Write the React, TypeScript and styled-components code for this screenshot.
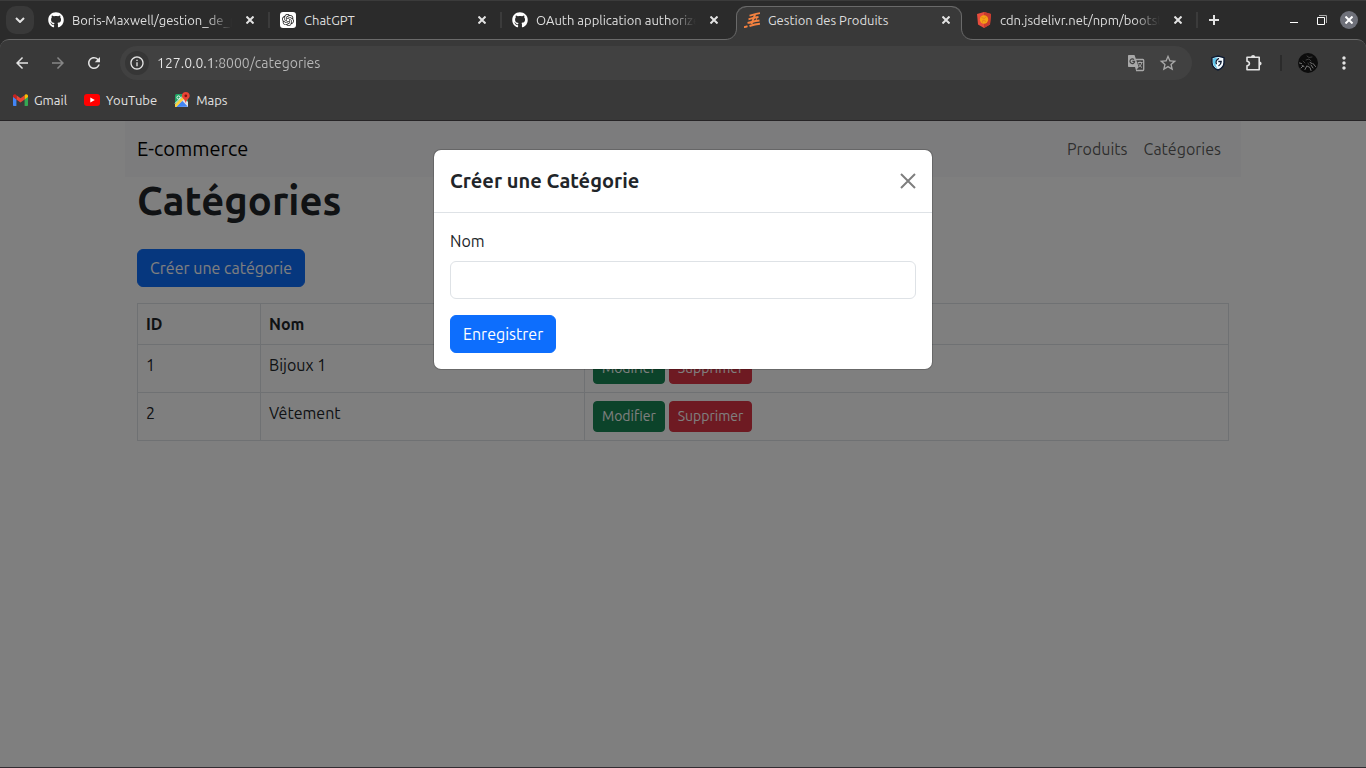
import React from "react";
import styled, { createGlobalStyle, css } from "styled-components";
import { FaGithub } from "react-icons/fa";
import { SiOpenai } from "react-icons/si";
import {
  MdArrowBack,
  MdArrowForward,
  MdInfoOutline,
  MdMoreVert,
  MdRefresh,
  MdStarBorder,
} from "react-icons/md";

const uiFont = `Ubuntu, "Noto Sans", "Open Sans", sans-serif`;

const GlobalStyle = createGlobalStyle`
  *, *::before, *::after { box-sizing: border-box; }
  body { margin: 0; background: #2b2b2b; font-family: ${uiFont}; }
  button, input { font-family: inherit; }
  svg { display: block; flex: none; }
`;

const Window = styled.div`
  display: flex;
  flex-direction: column;
  min-height: 100vh;
  border-bottom: 1px solid #322c32;
`;

/* ---------- browser chrome ---------- */

const TabStrip = styled.header`
  display: flex;
  align-items: flex-end;
  height: 39px;
  padding-left: 6px;
  background: #2b2b2b;
  border-top: 1px solid #3b3b3b;
`;

const IconButton = styled.button<{ $size?: number; $dim?: boolean }>`
  display: flex;
  flex: none;
  align-items: center;
  justify-content: center;
  width: ${(p) => p.$size ?? 16}px;
  height: ${(p) => p.$size ?? 16}px;
  padding: 0;
  border: 0;
  border-radius: 50%;
  background: transparent;
  color: ${(p) => (p.$dim ? "#868686" : "#e3e3e3")};
`;

const TabSearch = styled(IconButton)`
  width: 28px;
  height: 28px;
  margin: 0 6px 5px 0;
  border-radius: 10px;
  background: #393939;
`;

const NewTab = styled(IconButton)`
  margin-bottom: 5px;
`;

const TabItem = styled.div<{ $active?: boolean; $divided?: boolean }>`
  position: relative;
  display: flex;
  flex: 0 1 226px;
  align-items: center;
  gap: 8px;
  min-width: 0;
  height: 34px;
  margin: 0 6px -1px 0;
  padding: 0 8px 7px 8px;
  border: 1px solid transparent;
  border-width: 1px 0 0;

  ${(p) =>
    p.$active &&
    css`
      z-index: 1;
      border-color: #6a6a6a;
      border-radius: 10px 10px 0 0;
      background: #393939;
      box-shadow: inset 1px 0 #6a6a6a, inset -1px 0 #6a6a6a;
    `}

  ${(p) =>
    p.$divided &&
    css`
      &::after {
        content: "";
        position: absolute;
        right: -4px;
        top: 5px;
        width: 2px;
        height: 16px;
        background: #3b3b3b;
      }
    `}
`;

const TabFoot = styled.svg<{ $side: "left" | "right" }>`
  position: absolute;
  bottom: 0;
  ${(p) => p.$side}: -11px;
  ${(p) => p.$side === "right" && "transform: scaleX(-1);"}
`;

const TabTitle = styled.button<{ $faded?: boolean }>`
  flex: 1;
  min-width: 0;
  overflow: hidden;
  padding: 0;
  border: 0;
  background: transparent;
  color: #dedede;
  font-size: 13px;
  line-height: 20px;
  text-align: left;
  white-space: nowrap;
  ${(p) =>
    p.$faded &&
    css`
      mask-image: linear-gradient(90deg, #000 84%, transparent 100%);
    `}
`;

const TabClose = styled(IconButton)`
  margin-left: 2px;
`;

const WindowControls = styled.div`
  display: flex;
  align-items: center;
  gap: 8px;
  height: 39px;
  margin-left: auto;
  padding-right: 8px;
`;

const WindowClose = styled(IconButton)`
  background: #6f717a;
  color: #fff;
`;

const Toolbar = styled.div`
  padding: 6px 10px 0;
  border-top: 1px solid #6a6a6a;
  border-bottom: 1px solid #262426;
  border-radius: 9px 9px 0 0;
  background: #393939;
  color: #e3e3e3;
`;

const NavRow = styled.div`
  display: flex;
  align-items: center;
  height: 34px;
`;

const NavButtons = styled.div`
  display: flex;
  gap: 12px;
  margin-right: 14px;
`;

const AddressBar = styled.label`
  display: flex;
  flex: 1;
  align-items: center;
  gap: 8px;
  height: 34px;
  padding: 0 14px 0 5px;
  border-radius: 17px;
  background: #414141;
`;

const SiteInfo = styled(IconButton)`
  background: #363636;
`;

const Address = styled.input`
  flex: 1;
  min-width: 0;
  padding: 0;
  border: 0;
  outline: 0;
  background: linear-gradient(90deg, #e6e6e6 58px, #b9b9b9 58px);
  background-clip: text;
  color: transparent;
  font-size: 14px;
  line-height: 20px;
`;

const AddressActions = styled.div`
  display: flex;
  align-items: center;
  gap: 13px;
  color: #a8a8a8;
`;

const Extensions = styled.div`
  display: flex;
  align-items: center;
  gap: 16px;
  margin: 0 2px 0 16px;
`;

const Divider = styled.span`
  width: 2px;
  height: 16px;
  background: #2b2b2b;
`;

const Bookmarks = styled.nav`
  display: flex;
  align-items: center;
  gap: 17px;
  height: 40px;
  padding-left: 3px;
`;

const Bookmark = styled.a`
  display: flex;
  align-items: center;
  gap: 6px;
  color: #e3e3e3;
  font-size: 13px;
  line-height: 20px;
  text-decoration: none;
`;

/* ---------- web page ---------- */

const Viewport = styled.div`
  position: relative;
  flex: 1;
  background: #fff;
  color: #212529;
  font-size: 16px;
  line-height: 24px;
`;

const Container = styled.div`
  max-width: 1140px;
  margin: 0 auto;
  padding: 0 12px;
`;

const Navbar = styled.nav`
  display: flex;
  align-items: center;
  justify-content: space-between;
  height: 56px;
  padding: 0 12px;
  background: #f8f9fa;
`;

const Brand = styled.a`
  color: #000;
  font-size: 20px;
  line-height: 30px;
  text-decoration: none;
`;

const NavLinks = styled.div`
  display: flex;
  gap: 16px;
  padding-right: 8px;
`;

const NavLink = styled.a`
  color: rgba(0, 0, 0, 0.65);
  text-decoration: none;
`;

const Main = styled.main`
  padding: 0 12px;
`;

const Heading = styled.h1`
  margin: 0 0 24px;
  font-size: 40px;
  font-weight: 600;
  line-height: 48px;
`;

const tones = { primary: "#0d6efd", success: "#198754", danger: "#dc3545" };

const Button = styled.button<{ $tone: keyof typeof tones; $small?: boolean }>`
  padding: ${(p) => (p.$small ? "4px 8px" : "6px 12px")};
  border: 1px solid ${(p) => tones[p.$tone]};
  border-radius: ${(p) => (p.$small ? 4 : 6)}px;
  background: ${(p) => tones[p.$tone]};
  color: #fff;
  font-size: ${(p) => (p.$small ? 14 : 16)}px;
  line-height: ${(p) => (p.$small ? 21 : 24)}px;
`;

const Actions = styled.div`
  display: flex;
  gap: 4px;
`;

const Table = styled.table`
  width: 100%;
  margin-top: 16px;
  border-collapse: collapse;
  table-layout: fixed;

  th,
  td {
    padding: 8px;
    border: 1px solid #dee2e6;
    text-align: left;
    vertical-align: top;
  }
`;

const Column = styled.col<{ $width: number }>`
  width: ${(p) => p.$width}px;
`;

const Backdrop = styled.div`
  position: absolute;
  inset: 0;
  padding: 28px 16px;
  background: rgba(0, 0, 0, 0.5);
`;

const Dialog = styled.section`
  max-width: 500px;
  margin: 0 auto;
  border: 1px solid rgba(0, 0, 0, 0.175);
  border-radius: 8px;
  background: #fff;
  background-clip: padding-box;
`;

const DialogHeader = styled.header`
  display: flex;
  align-items: center;
  justify-content: space-between;
  padding: 16px;
  border-bottom: 1px solid #dee2e6;
`;

const DialogTitle = styled.h5`
  margin: 0;
  font-size: 20px;
  font-weight: 600;
  line-height: 30px;
`;

const DialogClose = styled(IconButton)`
  color: #000;
  opacity: 0.5;
`;

const DialogForm = styled.form`
  padding: 16px;
`;

const Field = styled.div`
  display: flex;
  flex-direction: column;
  gap: 8px;
  margin-bottom: 16px;
`;

const TextInput = styled.input`
  width: 100%;
  height: 38px;
  padding: 6px 12px;
  border: 1px solid #dee2e6;
  border-radius: 6px;
  background: #fff;
  font-size: 16px;
`;

/* ---------- drawings ---------- */

const Cross = ({ size = 8, weight = 2 }: { size?: number; weight?: number }) => (
  <svg width={size} height={size} viewBox="0 0 8 8" stroke="currentColor" strokeWidth={weight}>
    <path d="M.5.5l7 7M7.5.5l-7 7" />
  </svg>
);

const ChatIcon = () => (
  <svg width="16" height="16" viewBox="0 0 16 16">
    <rect width="16" height="16" rx="3" fill="#fff" />
    <SiOpenai x="2" y="2" size={12} color="#222" />
  </svg>
);

const XamppIcon = () => (
  <svg width="16" height="16" viewBox="0 0 16 16" fill="none" stroke="#f58240" strokeWidth="1.9">
    <path d="M5.500 3.600c3-.4 4-1.700 10.500-2.500M4.500 7.200c3-.3 4-1.700 10-2.200M3.500 10.900c4-.3 5-1.700 12-2.400M0 15.200c1.500-.2 2.500-.7 3.500-1M5.500 14c3-.9 5-1.600 10.500-2.300" />
    <path d="M11 2.500L7.500 12" strokeWidth="2" />
    <path d="M13 5.500l-1 3" strokeWidth="1" />
  </svg>
);

const JsDelivrIcon = () => (
  <svg width="16" height="16" viewBox="0 0 16 16">
    <path d="M8 0l7 2-1 10.500L8 16l-6-3.500L1 2z" fill="#e84d3d" />
    <path d="M8 0l7 2-1 10.500L8 16z" fill="#c93c2e" />
    <circle cx="8" cy="7.500" r="4.200" fill="#f5a214" />
    <path d="M5.500 5.500l3 1 1.500-2M6.500 10.500l.5-2.500 3 1.500" stroke="#e0791c" strokeWidth=".8" fill="none" />
  </svg>
);

const GmailIcon = () => (
  <svg width="15" height="12" viewBox="0 0 15 12">
    <path d="M0 2v9c0 .6.400 1 1 1h2.400V5z" fill="#4285f4" />
    <path d="M15 2v9c0 .6-.4 1-1 1h-2.400V5z" fill="#34a853" />
    <path d="M3.400 1.200v4.300l4.100 3.100 4.100-3.100V1.200L7.500 4.300z" fill="#ea4335" />
    <path d="M0 2v1l3.400 2.600V1.200L2.700.6C1.500-.3 0 .5 0 2z" fill="#c5221f" />
    <path d="M15 2v1l-3.400 2.600V1.200l.7-.6C13.500-.3 15 .5 15 2z" fill="#fbbc04" />
  </svg>
);

const YouTubeIcon = () => (
  <svg width="16" height="12" viewBox="0 0 16 12">
    <rect width="16" height="12" rx="3" fill="#f00" />
    <path d="M6.300 3.400v5.200L10.800 6z" fill="#fff" />
  </svg>
);

const MapsIcon = () => (
  <svg width="16" height="16" viewBox="-1 0 16 16">
    <rect y="2" width="13" height="13" rx="1.500" fill="#1fa463" />
    <path d="M0 12.500L8 5l5 5v5H1z" fill="#dfe3e8" />
    <path d="M1 15l6.200-6.200L13 14.800z" fill="#4285f4" />
    <path d="M0 12.500L7.500 5l1.800 1.800L1.200 15H0z" fill="#fbd13c" />
    <path d="M0 11.500l7-7" stroke="#fff" />
    <circle cx="3.500" cy="5.500" r="1.600" fill="none" stroke="#fff" strokeWidth=".9" />
    <path d="M10.800 0c-2.300 0-3.900 1.700-3.900 3.800 0 2.700 3.200 3.700 3.900 7.200.7-3.500 3.900-4.500 3.900-7.200C14.700 1.700 13.100 0 10.800 0z" fill="#ea4335" />
    <circle cx="10.800" cy="3.800" r="1.400" fill="#811411" />
  </svg>
);

const TranslateIcon = () => (
  <svg width="18" height="18" viewBox="0 0 18 18" fill="none">
    <path d="M8.500 5.500h7.300c.5 0 .9.400.9.900v9.200c0 .5-.4.900-.9.900H9" stroke="#a8a8a8" strokeWidth="1.300" />
    <path d="M2 1h5.500l4.200 12H2c-.6 0-1-.4-1-1V2c0-.6.400-1 1-1z" fill="#a8a8a8" />
    <path d="M8 13l1 3.500 2.700-3.500z" fill="#a8a8a8" />
    <path d="M7 5.700a2.300 2.300 0 1 0 .6 1.700H5.400" stroke="#414141" strokeWidth="1.200" />
    <path d="M10.800 8.500h4.700M13 7.500v1M14.800 8.500c-.4 2-1.600 3.500-3 4.500M11.500 9.500c.6 1.500 2 3 3.500 4" stroke="#a8a8a8" />
  </svg>
);

const ShieldIcon = () => (
  <svg width="16" height="16" viewBox="0 0 16 16">
    <path d="M8 1l6 1.700v4.800c0 3.600-2.500 6.200-6 7.500-3.500-1.300-6-3.900-6-7.500V2.700z" fill="#f4fbff" stroke="#0d1b33" strokeWidth="1.400" />
    <path d="M8 2L3 3.500v4c0 2.800 2 5 5 6.200-1.800-2-2.500-4-2.500-6C5.500 5.500 6.500 3.500 8 2z" fill="#5fc8ef" />
    <path d="M9 3.300C6.300 4.500 5.300 6.800 6.500 9.300M8.300 6.500h2.900c0 1.900-.8 3.300-2.700 4.500" fill="none" stroke="#0d1b33" strokeWidth="1.300" />
  </svg>
);

const PuzzleIcon = () => (
  <svg width="18" height="18" viewBox="0 0 18 18" fill="none">
    <path d="M2 3.300h12.200v12.400H2v-4c1.700-.2 2.400-1 2.400-2.200S3.700 7.500 2 7.300z" stroke="#e3e3e3" strokeWidth="1.600" strokeLinejoin="round" />
    <path d="M6 3a2.100 2.100 0 0 1 4.200 0zM14.500 7.400a2.100 2.100 0 0 1 0 4.200z" fill="#e3e3e3" />
  </svg>
);

const AvatarIcon = () => (
  <svg width="20" height="20" viewBox="0 0 20 20">
    <circle cx="10" cy="10" r="10" fill="#0c0c0c" />
    <g fill="none" stroke="#777" strokeLinecap="round">
      <path d="M1.500 10l2 .5M4 12.500l2 1M3 15l2-2M7 16.500l1.500-3M9 13l3 1.500 1 3M13 12l2 3M15 10.500l2.500 3M12 9.500l2 1" />
      <path d="M9 3l2 1.500 3-.5M8 7l3-1 2 2M10 10l1 2M5 8l2 2" stroke="#3c3c3c" />
    </g>
  </svg>
);

const Foot = ({ side }: { side: "left" | "right" }) => (
  <TabFoot $side={side} width="12" height="12" viewBox="0 0 12 12">
    <path d="M0 12V11.500C7 11.500 11.500 7 11.500 0H12V12z" fill="#393939" />
    <path d="M0 11.500C7 11.500 11.500 7 11.500 0" fill="none" stroke="#6a6a6a" />
  </TabFoot>
);

/* ---------- data ---------- */

const tabs = [
  { title: "Boris-Maxwell/gestion_de_produits", icon: <FaGithub size={16} color="#fff" />, faded: true, divided: true },
  { title: "ChatGPT", icon: <ChatIcon />, divided: true },
  { title: "OAuth application authorized", icon: <FaGithub size={16} color="#fff" />, faded: true },
  { title: "Gestion des Produits", icon: <XamppIcon />, active: true },
  { title: "cdn.jsdelivr.net/npm/bootstrap", icon: <JsDelivrIcon />, faded: true, divided: true },
];

const categories = [
  { id: 1, name: "Bijoux 1" },
  { id: 2, name: "Vêtement" },
];

export default function App() {
  return (
    <Window>
      <GlobalStyle />
      <TabStrip>
        <TabSearch aria-label="Search tabs">
          <svg width="10" height="6" viewBox="0 0 10 6" fill="none" stroke="currentColor" strokeWidth="2">
            <path d="M1 1l4 4 4-4" />
          </svg>
        </TabSearch>
        {tabs.map((tab) => (
          <TabItem key={tab.title} $active={tab.active} $divided={tab.divided}>
            {tab.active && <Foot side="left" />}
            {tab.icon}
            <TabTitle $faded={tab.faded}>{tab.title}</TabTitle>
            <TabClose aria-label="Close tab">
              <Cross />
            </TabClose>
            {tab.active && <Foot side="right" />}
          </TabItem>
        ))}
        <NewTab $size={28} aria-label="New tab">
          <svg width="10" height="10" viewBox="0 0 10 10" stroke="currentColor" strokeWidth="2">
            <path d="M5 0v10M0 5h10" />
          </svg>
        </NewTab>
        <WindowControls>
          <IconButton $size={20} aria-label="Minimize">
            <svg width="8" height="10" viewBox="0 0 8 10">
              <path d="M0 7.500h8" stroke="#fff" />
            </svg>
          </IconButton>
          <IconButton $size={20} aria-label="Restore">
            <svg width="10" height="10" viewBox="0 0 10 10" fill="none">
              <path d="M.5 2.500h7v7h-7z" stroke="#fff" />
              <path d="M2 .5h7.500V8" stroke="#aaa" />
            </svg>
          </IconButton>
          <WindowClose $size={18} aria-label="Close window">
            <Cross />
          </WindowClose>
        </WindowControls>
      </TabStrip>

      <Toolbar>
        <NavRow>
          <NavButtons>
            <IconButton $size={24} aria-label="Back">
              <MdArrowBack size={18} />
            </IconButton>
            <IconButton $size={24} $dim aria-label="Forward">
              <MdArrowForward size={18} />
            </IconButton>
            <IconButton $size={24} aria-label="Reload">
              <MdRefresh size={18} />
            </IconButton>
          </NavButtons>
          <AddressBar>
            <SiteInfo $size={24} aria-label="Site information">
              <MdInfoOutline size={16} />
            </SiteInfo>
            <Address aria-label="Address" defaultValue="127.0.0.1:8000/categories" />
            <AddressActions>
              <TranslateIcon />
              <MdStarBorder size={20} />
            </AddressActions>
          </AddressBar>
          <Extensions>
            <IconButton $size={20} aria-label="Shield extension">
              <ShieldIcon />
            </IconButton>
            <IconButton $size={20} aria-label="Extensions">
              <PuzzleIcon />
            </IconButton>
            <Divider />
            <IconButton $size={20} aria-label="Profile">
              <AvatarIcon />
            </IconButton>
            <IconButton $size={20} aria-label="Menu">
              <MdMoreVert size={20} />
            </IconButton>
          </Extensions>
        </NavRow>
        <Bookmarks aria-label="Bookmarks">
          <Bookmark href="#gmail">
            <GmailIcon />
            Gmail
          </Bookmark>
          <Bookmark href="#youtube">
            <YouTubeIcon />
            YouTube
          </Bookmark>
          <Bookmark href="#maps">
            <MapsIcon />
            Maps
          </Bookmark>
        </Bookmarks>
      </Toolbar>

      <Viewport>
        <Container>
          <Navbar>
            <Brand href="#accueil">E-commerce</Brand>
            <NavLinks>
              <NavLink href="#produits">Produits</NavLink>
              <NavLink href="#categories">Catégories</NavLink>
            </NavLinks>
          </Navbar>
          <Main>
            <Heading>Catégories</Heading>
            <Button $tone="primary">Créer une catégorie</Button>
            <Table>
              <colgroup>
                <Column $width={123} />
                <Column $width={324} />
                <col />
              </colgroup>
              <thead>
                <tr>
                  <th>ID</th>
                  <th>Nom</th>
                  <th>Actions</th>
                </tr>
              </thead>
              <tbody>
                {categories.map((category) => (
                  <tr key={category.id}>
                    <td>{category.id}</td>
                    <td>{category.name}</td>
                    <td>
                      <Actions>
                        <Button $tone="success" $small>Modifier</Button>
                        <Button $tone="danger" $small>Supprimer</Button>
                      </Actions>
                    </td>
                  </tr>
                ))}
              </tbody>
            </Table>
          </Main>
        </Container>

        <Backdrop>
          <Dialog role="dialog" aria-labelledby="dialog-title">
            <DialogHeader>
              <DialogTitle id="dialog-title">Créer une Catégorie</DialogTitle>
              <DialogClose aria-label="Fermer">
                <Cross size={16} weight={1} />
              </DialogClose>
            </DialogHeader>
            <DialogForm onSubmit={(event) => event.preventDefault()}>
              <Field>
                <label htmlFor="nom">Nom</label>
                <TextInput id="nom" name="nom" type="text" />
              </Field>
              <Button $tone="primary" type="submit">Enregistrer</Button>
            </DialogForm>
          </Dialog>
        </Backdrop>
      </Viewport>
    </Window>
  );
}
